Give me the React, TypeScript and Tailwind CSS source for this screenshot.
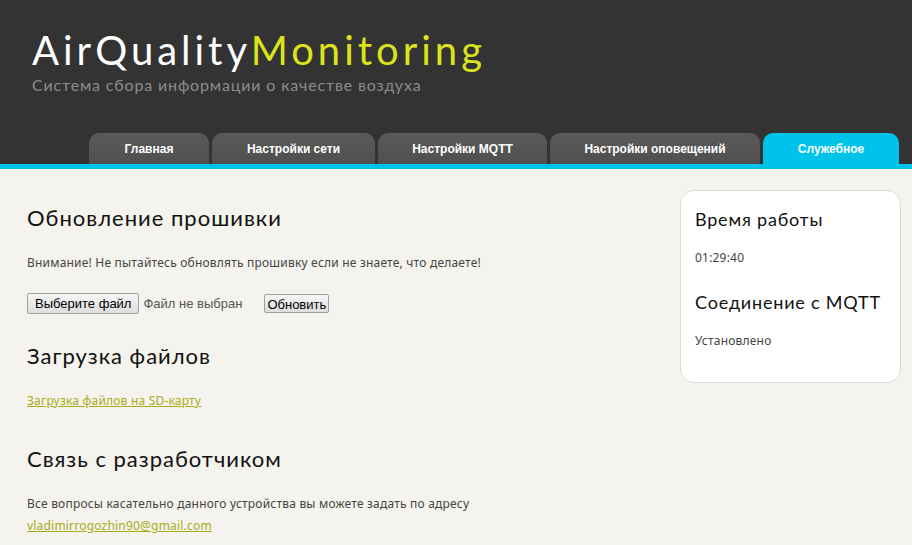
const tabs = ["Главная", "Настройки сети", "Настройки MQTT", "Настройки оповещений", "Служебное"];
const tabWidths = ["w-[120px]", "w-[163px]", "w-[169px]", "w-[210px]", "w-[136px]"];

const heading = "font-['Lato',sans-serif] text-[22px] font-normal text-[#111] tracking-[1px]";
const body = "font-['Noto_Sans',sans-serif] text-[12px] tracking-[0.2px] text-[#444]";

export default function App() {
  return (
    <div className="min-h-[545px] bg-[#f4f3ed]">
      {/* header */}
      <div className="bg-[#333333] pt-[26px]">
        <div className="pl-[32px]">
          <h1 className="font-['Lato',sans-serif] text-[40px] leading-[48px] tracking-[4px] text-white">
            AirQuality<span className="text-[#dce31c]">Monitoring</span>
          </h1>
          <p className="font-['Lato',sans-serif] text-[16px] leading-[22px] tracking-[0.85px] text-[#8c8c8c]">
            Система сбора информации о качестве воздуха
          </p>
        </div>
        <div className="flex gap-[3px] pl-[89px] mt-[37px]">
          {tabs.map((t, i) => (
            <div
              key={t}
              className={`${tabWidths[i]} h-[31px] rounded-t-[10px] flex items-center justify-center font-['Liberation_Sans',sans-serif] text-[12px] font-bold text-white ${
                i === 4 ? "bg-[#00c3ea]" : "bg-gradient-to-b from-[#5a5a5a] to-[#4f4f4f]"
              }`}
            >
              {t}
            </div>
          ))}
        </div>
      </div>
      <div className="h-[5px] bg-[#00c3ea]" />

      {/* content */}
      <div className="flex justify-between pl-[27px] pr-[11px]">
        <div className="pt-[32px]">
          <h2 className={heading}>Обновление прошивки</h2>
          <p className={`${body} mt-[20px]`}>Внимание! Не пытайтесь обновлять прошивку если не знаете, что делаете!</p>
          <div className="mt-[21px] flex items-center">
            <button className="font-['Liberation_Sans',sans-serif] text-[13px] text-black border border-[#a0a0a0] bg-gradient-to-b from-[#f6f6f6] to-[#dedede] px-[7px] h-[21px] rounded-[2px]">
              Выберите файл
            </button>
            <span className="font-['Liberation_Sans',sans-serif] text-[13px] text-[#555] ml-[4px]">Файл не выбран</span>
            <button className="font-['Liberation_Sans',sans-serif] text-[13px] text-black border border-[#a0a0a0] bg-gradient-to-b from-[#f6f6f6] to-[#dedede] px-[2px] h-[19px] rounded-[2px] ml-[22px]">
              Обновить
            </button>
          </div>

          <h2 className={`${heading} mt-[25px]`}>Загрузка файлов</h2>
          <a href="#" className={`${body} block mt-[20px] text-[#a9ab1a] underline`}>Загрузка файлов на SD-карту</a>

          <h2 className={`${heading} mt-[32px]`}>Связь с разработчиком</h2>
          <p className={`${body} mt-[18px] leading-[22px]`}>
            Все вопросы касательно данного устройства вы можете задать по адресу
            <br />
            <a href="#" className="text-[#a9ab1a] underline">vladimirrogozhin90@gmail.com</a>
          </p>
        </div>

        <div className="mt-[21px] w-[221px] h-[193px] bg-white border border-[#dcdcdc] rounded-[14px] pl-[14px] pt-[15px]">
          <h3 className="font-['Lato',sans-serif] text-[18px] text-[#111] tracking-[0.8px]">Время работы</h3>
          <p className={`${body} mt-[16px]`}>01:29:40</p>
          <h3 className="font-['Lato',sans-serif] text-[18px] text-[#111] tracking-[0.8px] mt-[22px]">Соединение с MQTT</h3>
          <p className={`${body} mt-[16px]`}>Установлено</p>
        </div>
      </div>
    </div>
  );
}
